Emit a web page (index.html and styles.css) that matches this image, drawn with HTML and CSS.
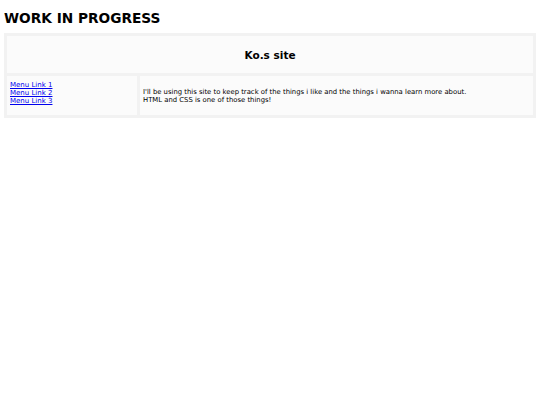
FILE: index.html
```html
<!DOCTYPE html>
<html>
<head>
<meta charset="utf-8">
<link rel="stylesheet" href="styles.css">
</head>
<body>
<h1 class="title">WORK IN PROGRESS</h1>
<table class="layout">
  <tr>
    <td class="header" colspan="2"><h2 class="site-name">Ko.s site</h2></td>
  </tr>
  <tr>
    <td class="menu">
      <a href="#">Menu Link 1</a><br>
      <a href="#">Menu Link 2</a><br>
      <a href="#">Menu Link 3</a>
    </td>
    <td class="content">I'll be using this site to keep track of the things i like and the things i wanna learn more about.<br>HTML and CSS is one of those things!</td>
  </tr>
</table>
</body>
</html>
```
FILE: styles.css
```css
html, body {
  background: #ffffff;
}
body {
  margin: 4px;
  font-family: "DejaVu Sans", Verdana, sans-serif;
  font-size: 7px;
  color: #000;
}
.title {
  font-size: 13.7px;
  font-weight: bold;
  margin: 6px 0 7px 0;
  line-height: 1.2;
}
.layout {
  width: 100%;
  background: #f2f2f2;
  border-spacing: 3px;
}
.layout td {
  background: #fbfbfb;
  padding: 3px;
}
.header {
  height: 31px;
  text-align: center;
}
.site-name {
  font-size: 10.5px;
  font-weight: bold;
  margin: 0;
}
.layout .menu {
  width: 124px;
  padding: 5px 3px 10px 3px;
  vertical-align: middle;
  line-height: 8px;
}
.menu a {
  color: #0000ee;
}
.content {
  line-height: 8px;
  vertical-align: middle;
  font-size: 6.85px;
}
```
